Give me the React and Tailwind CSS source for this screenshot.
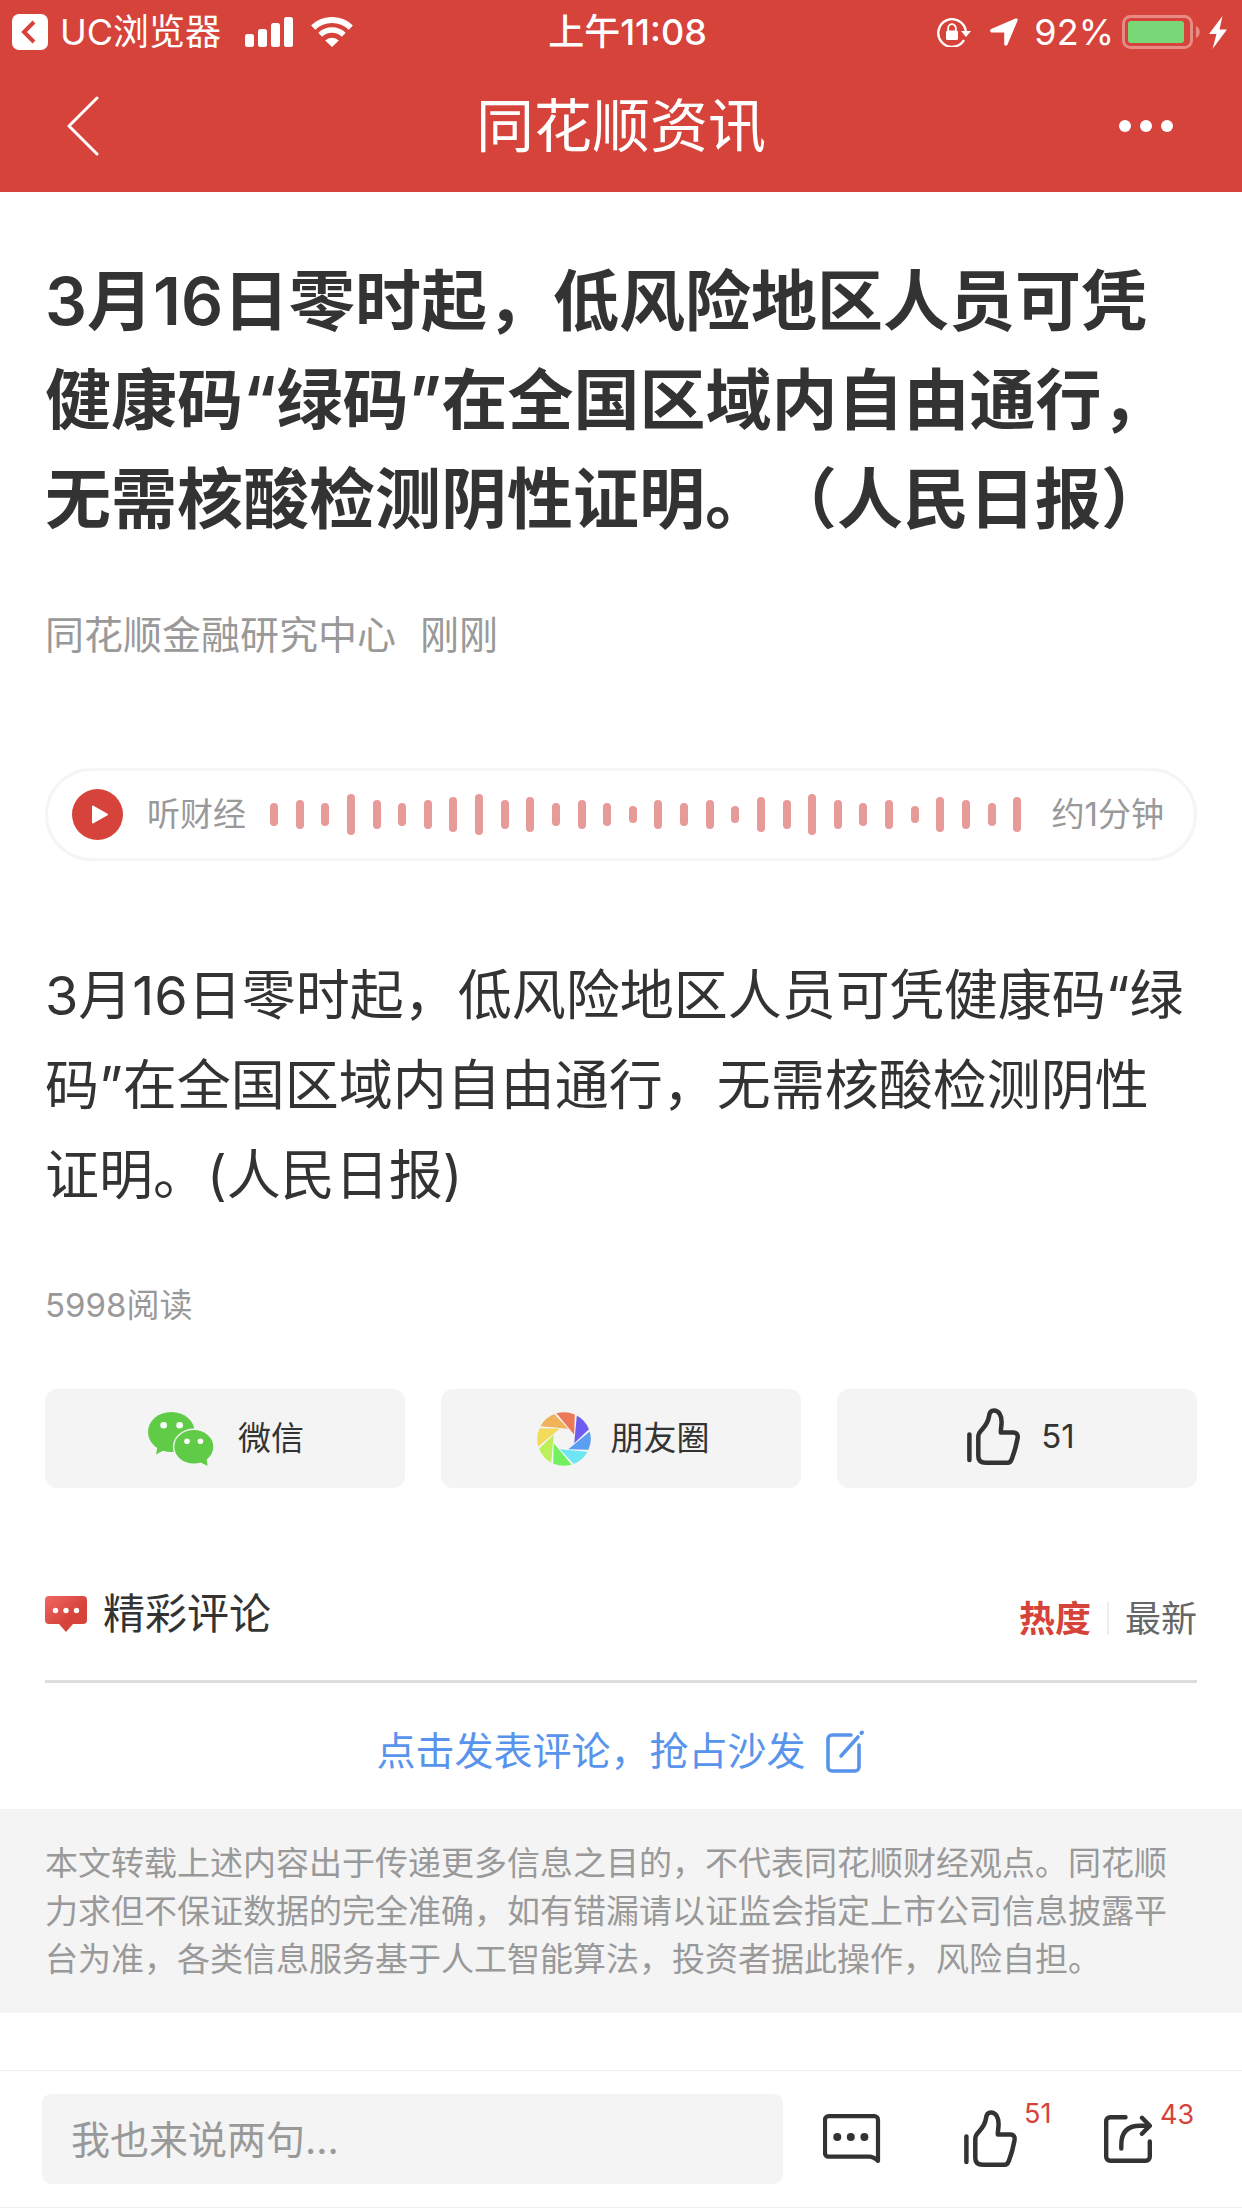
import React from 'react';

const barHeights = {
    xs: 'h-[17px]',
    sm: 'h-[23px]',
    md: 'h-[29px]',
    lg: 'h-[35px]',
    xl: 'h-[41px]'
};

const waveform = [
    'sm', 'md', 'sm', 'xl', 'md', 'sm', 'md', 'lg', 'xl', 'md',
    'lg', 'sm', 'md', 'sm', 'xs', 'md', 'sm', 'md', 'xs', 'lg',
    'md', 'xl', 'md', 'sm', 'md', 'xs', 'lg', 'md', 'sm', 'lg'
];

const bladeColors = ['#ee7959', '#6e5cf0', '#5b9ff2', '#6ce6f2', '#72f060', '#bcf05b', '#f2da5b', '#f0b35c'];

const ThumbIcon = () => (
    <svg width="54" height="58" viewBox="0 0 54 58" fill="none" stroke="#333" strokeWidth="4.5" strokeLinecap="round" strokeLinejoin="round" aria-hidden="true">
        <path d="M2.4 26.5V52" />
        <path d="M11.3 29C11.3 24.5 13 24 15.5 21C19.5 16.5 21.3 12.5 22 8.5C22.3 5 23.5 2.4 27 2.4C32 2.4 34.6 8 34.6 14C34.6 18 33.8 20 33.8 24.6H46.5C49.5 24.6 51.3 27 50.6 30C49.5 36 47.5 44 45 50.5C44 53.5 43 54.8 40.5 54.8H19C14 54.8 11.3 52.5 11.3 48Z" />
    </svg>
);

const WechatIcon = () => (
    <svg width="66" height="54" viewBox="0 0 66 54" aria-hidden="true">
        <path d="M10 32L8 42.5L18 37Z" fill="#60cb46" />
        <ellipse cx="23.3" cy="20" rx="23.3" ry="20" fill="#60cb46" />
        <ellipse cx="45.8" cy="34.8" rx="20.9" ry="18.2" fill="#f4f4f4" />
        <path d="M52 50L59.5 54L58.5 45Z" fill="#60cb46" />
        <ellipse cx="45.8" cy="34.8" rx="19.5" ry="16.8" fill="#60cb46" />
        <g fill="#fff">
            <circle cx="15.6" cy="13.2" r="3.3" />
            <circle cx="31.6" cy="13.2" r="3.3" />
            <circle cx="39" cy="29.2" r="2.8" />
            <circle cx="52.4" cy="29.2" r="2.8" />
        </g>
    </svg>
);

const MomentsIcon = () => (
    <svg width="54" height="54" viewBox="-27 -27 54 54" aria-hidden="true">
        {bladeColors.map((color, i) => (
            <path
                key={color}
                d="M-7.6 -25.7A26.8 26.8 0 0 1 10.8 -24.5L10.2 -4.3Z"
                fill={color}
                transform={`rotate(${i * 45})`}
            />
        ))}
    </svg>
);

const StatusBar = () => (
    <div className="grid grid-cols-3 items-center h-16 pl-3 pr-[15px] text-4xl">
        <div className="flex items-center">
            <svg width="36" height="36" viewBox="0 0 36 36" fill="none" aria-hidden="true">
                <rect width="36" height="36" rx="7" fill="#fff" />
                <path d="M22 8L12 18L22 28" stroke="#d6433b" strokeWidth="4" />
            </svg>
            <span className="ml-3 whitespace-nowrap">UC浏览器</span>
            <svg className="ml-6 shrink-0" width="48" height="30" viewBox="0 0 48 30" fill="#fff" aria-hidden="true">
                <rect y="17" width="9" height="13" rx="2.5" />
                <rect x="13" y="12" width="9" height="18" rx="2.5" />
                <rect x="26" y="6" width="9" height="24" rx="2.5" />
                <rect x="39" width="9" height="30" rx="2.5" />
            </svg>
            <svg className="ml-[18px] shrink-0" width="42" height="30" viewBox="0 0 42 30" fill="none" stroke="#fff" aria-hidden="true">
                <path d="M2.2 10.6A27 27 0 0 1 39.8 10.6" strokeWidth="6" />
                <path d="M9.2 17.8A17 17 0 0 1 32.8 17.8" strokeWidth="5.5" />
                <path d="M21 30L14.2 23.5A9.5 9.5 0 0 1 27.8 23.5Z" fill="#fff" stroke="none" />
            </svg>
        </div>
        <div className="pl-4 text-center font-medium">上午11:08</div>
        <div className="flex items-center justify-end">
            <svg width="34" height="30" viewBox="0 0 34 30" fill="none" aria-hidden="true">
                <path d="M27 23A13.8 13.8 0 1 1 28.8 14.5" stroke="#fff" strokeWidth="2.4" />
                <path d="M24 14H34L29 20Z" fill="#fff" />
                <rect x="9" y="13.5" width="12" height="9.5" rx="1.5" fill="#fff" />
                <path d="M11.2 14V11A3.8 3.8 0 0 1 18.8 11V14" stroke="#fff" strokeWidth="1.8" />
            </svg>
            <svg className="ml-[19px]" width="28" height="28" viewBox="0 0 28 28" fill="#fff" aria-hidden="true">
                <path d="M25.5 .6C27.2 0 28.2 1 27.5 2.7L17.5 26.5C16.8 28.3 14.2 28 14.2 26V14.5H2C0 14.5-.6 12 1.2 11Z" />
            </svg>
            <span className="ml-4">92%</span>
            <svg className="ml-2 shrink-0" width="78" height="34" viewBox="0 0 78 34" fill="none" aria-hidden="true">
                <rect x="1.5" y="1.5" width="68" height="31" rx="7" stroke="#e78a84" strokeWidth="3" />
                <rect x="6" y="6" width="56" height="22" rx="3" fill="#79d777" />
                <path d="M74 11C79 13 79 21 74 23Z" fill="#e78a84" />
            </svg>
            <svg className="ml-[9px] shrink-0" width="18" height="33" viewBox="0 0 18 33" fill="#fff" aria-hidden="true">
                <path d="M13.5 0L0 18H7.5L3.5 33L18 13.5H10.5Z" />
            </svg>
        </div>
    </div>
);

const NavBar = () => (
    <div className="flex items-center justify-between h-32 pl-[66px] pr-[68px] pb-1">
        <button aria-label="返回">
            <svg width="33" height="60" viewBox="0 0 33 60" fill="none" stroke="#fff" strokeWidth="3" strokeLinecap="round" strokeLinejoin="round">
                <path d="M31 2L3 30L31 58" />
            </svg>
        </button>
        <h1 className="pl-[26px] text-[58px] leading-none">同花顺资讯</h1>
        <button aria-label="更多">
            <svg width="57" height="12" viewBox="0 0 57 12" fill="#fff">
                <circle cx="8" cy="6" r="6" />
                <circle cx="29" cy="6" r="6" />
                <circle cx="50" cy="6" r="6" />
            </svg>
        </button>
    </div>
);

const AudioPlayer = () => (
    <div className="flex items-center h-[93px] mt-[103px] pl-6 pr-[30px] border-3 border-[#f5f5f5] rounded-full text-[33px] text-[#999]">
        <button aria-label="播放" className="shrink-0">
            <svg width="51" height="51" viewBox="0 0 51 51">
                <circle cx="25.5" cy="25.5" r="25.5" fill="#d6433b" />
                <path d="M21 17.5L35 25.5L21 33.5Z" fill="#fff" stroke="#fff" strokeWidth="2" strokeLinejoin="round" />
            </svg>
        </button>
        <span className="ml-6 whitespace-nowrap">听财经</span>
        <div className="flex flex-1 items-center justify-between ml-6 mr-[30px]">
            {waveform.map((size, i) => (
                <span key={i} className={`w-2 rounded-full bg-[#e79b98] ${barHeights[size]}`} />
            ))}
        </div>
        <span className="whitespace-nowrap">约1分钟</span>
    </div>
);

const ShareButtons = () => (
    <div className="grid grid-cols-3 gap-9 mt-[60px] text-[33px] text-[#333]">
        <button className="flex items-center justify-center gap-6 h-[99px] pl-0.5 rounded-xl bg-[#f4f4f4]">
            <WechatIcon />
            微信
        </button>
        <button className="flex items-center justify-center gap-5 h-[99px] pl-1 rounded-xl bg-[#f4f4f4]">
            <MomentsIcon />
            朋友圈
        </button>
        <button className="flex items-center justify-center gap-5 h-[99px] pl-2 pb-1 rounded-xl bg-[#f4f4f4]">
            <ThumbIcon />
            51
        </button>
    </div>
);

const Comments = () => (
    <section>
        <div className="flex items-center justify-between h-[132px] mt-[63px] border-b-3 border-[#ddd]">
            <h3 className="flex items-center gap-4 pb-1 text-[42px] leading-[60px] text-[#333]">
                <svg width="42" height="36" viewBox="0 0 42 36" aria-hidden="true">
                    <defs>
                        <linearGradient id="bubble" x1="0" y1="0" x2="1" y2="1">
                            <stop offset="0" stopColor="#ee6862" />
                            <stop offset=".6" stopColor="#d6433b" />
                        </linearGradient>
                    </defs>
                    <path d="M4 0H38A4 4 0 0 1 42 4V24A4 4 0 0 1 38 28H28L21 36L14 28H4A4 4 0 0 1 0 24V4A4 4 0 0 1 4 0Z" fill="url(#bubble)" />
                    <g fill="#fff">
                        <circle cx="10.5" cy="14.5" r="2.7" />
                        <circle cx="21" cy="14.5" r="2.7" />
                        <circle cx="31.5" cy="14.5" r="2.7" />
                    </g>
                </svg>
                精彩评论
            </h3>
            <div className="flex items-center pt-1.5 text-4xl">
                <button className="font-bold text-[#d6433b]">热度</button>
                <span className="w-0.5 h-[33px] mx-4 bg-[#eee]" />
                <button className="text-[#666]">最新</button>
            </div>
        </div>
        <button className="flex items-center justify-center gap-5 w-full h-[126px] pt-2.5 text-[39px] text-[#5893ec]">
            点击发表评论，抢占沙发
            <svg width="40" height="45" viewBox="0 0 40 45" fill="none" stroke="currentColor" strokeWidth="3.6" strokeLinecap="round" aria-hidden="true">
                <path d="M25 6H6A4 4 0 0 0 2 10V38A4 4 0 0 0 6 42H29A4 4 0 0 0 33 38V16" />
                <path d="M15 27L32 8" />
                <path d="M35.5 4L36 3.5" strokeWidth="4" />
            </svg>
        </button>
    </section>
);

const BottomBar = () => (
    <footer className="flex items-center h-[138px] pl-[42px] pr-[90px] border-y border-[#eee]">
        <input
            type="text"
            aria-label="发表评论"
            placeholder="我也来说两句..."
            className="flex-1 min-w-0 h-[90px] px-[29px] rounded-[9px] bg-[#f4f4f4] text-[39px] text-[#333] placeholder:text-[#999] outline-none"
        />
        <button aria-label="评论" className="ml-10">
            <svg width="58" height="50" viewBox="0 0 58 50" fill="none" stroke="#333" strokeWidth="4.2" strokeLinecap="round" strokeLinejoin="round">
                <path d="M5.5 2.2H51.5A3.5 3.5 0 0 1 55 5.7V47C52 44 50 42.7 46 42.7H5.5A3.5 3.5 0 0 1 2 39.2V5.7A3.5 3.5 0 0 1 5.5 2.2Z" />
                <g fill="#333" stroke="none">
                    <circle cx="14.3" cy="23" r="4" />
                    <circle cx="27.8" cy="23" r="4" />
                    <circle cx="41.4" cy="23" r="4" />
                </g>
            </svg>
        </button>
        <button aria-label="点赞" className="relative ml-[83px]">
            <ThumbIcon />
            <span className="absolute left-full -top-3 pl-1.5 text-[27px] leading-8 text-[#d6433b]">51</span>
        </button>
        <button aria-label="分享" className="relative ml-[86px]">
            <svg width="48" height="48" viewBox="0 0 48 48" fill="none" stroke="#333" strokeWidth="4.4" strokeLinecap="round" strokeLinejoin="round">
                <path d="M21.5 2.2H6.2A4 4 0 0 0 2.2 6.2V41.8A4 4 0 0 0 6.2 45.8H41.8A4 4 0 0 0 45.8 41.8V26.5" />
                <path d="M17.3 33.5V30C17.3 17 24 10.8 36 10.8H45" />
                <path d="M38 2.8L45.8 10.8L38 18.8" />
            </svg>
            <span className="absolute left-full -top-4 pl-2 text-[27px] leading-8 text-[#d6433b]">43</span>
        </button>
    </footer>
);

export default function App() {
    return (
        <div lang="zh-CN" className="flex flex-col min-h-screen bg-white font-['Inter','Noto_Sans_CJK_SC',sans-serif] [text-spacing-trim:space-all]">
            <header className="h-48 bg-[#d6433b] text-white">
                <StatusBar />
                <NavBar />
            </header>

            <main className="flex-1">
                <article className="px-[45px] pt-[60px]">
                    <h2 className="text-[66px] leading-[99px] font-semibold text-[#333]">
                        3月16日零时起，低风险地区人员可凭健康码“绿码”在全国区域内自由通行，无需核酸检测阴性证明。（人民日报）
                    </h2>
                    <div className="flex gap-6 mt-14 text-[39px] leading-[60px] text-[#999]">
                        <span>同花顺金融研究中心</span>
                        <time>刚刚</time>
                    </div>
                    <AudioPlayer />
                    <p className="mt-[90px] text-[54px] leading-[90px] text-[#333]">
                        3月16日零时起，低风险地区人员可凭健康码“绿码”在全国区域内自由通行，无需核酸检测阴性证明。(人民日报)
                    </p>
                    <div className="mt-[60px] text-[33px] leading-[48px] text-[#999]">5998阅读</div>
                    <ShareButtons />
                    <Comments />
                </article>
                <p className="px-[45px] py-[30px] bg-[#f4f4f4] text-[33px] leading-[48px] text-[#999]">
                    本文转载上述内容出于传递更多信息之目的，不代表同花顺财经观点。同花顺力求但不保证数据的完全准确，如有错漏请以证监会指定上市公司信息披露平台为准，各类信息服务基于人工智能算法，投资者据此操作，风险自担。
                </p>
            </main>

            <BottomBar />
        </div>
    );
}
